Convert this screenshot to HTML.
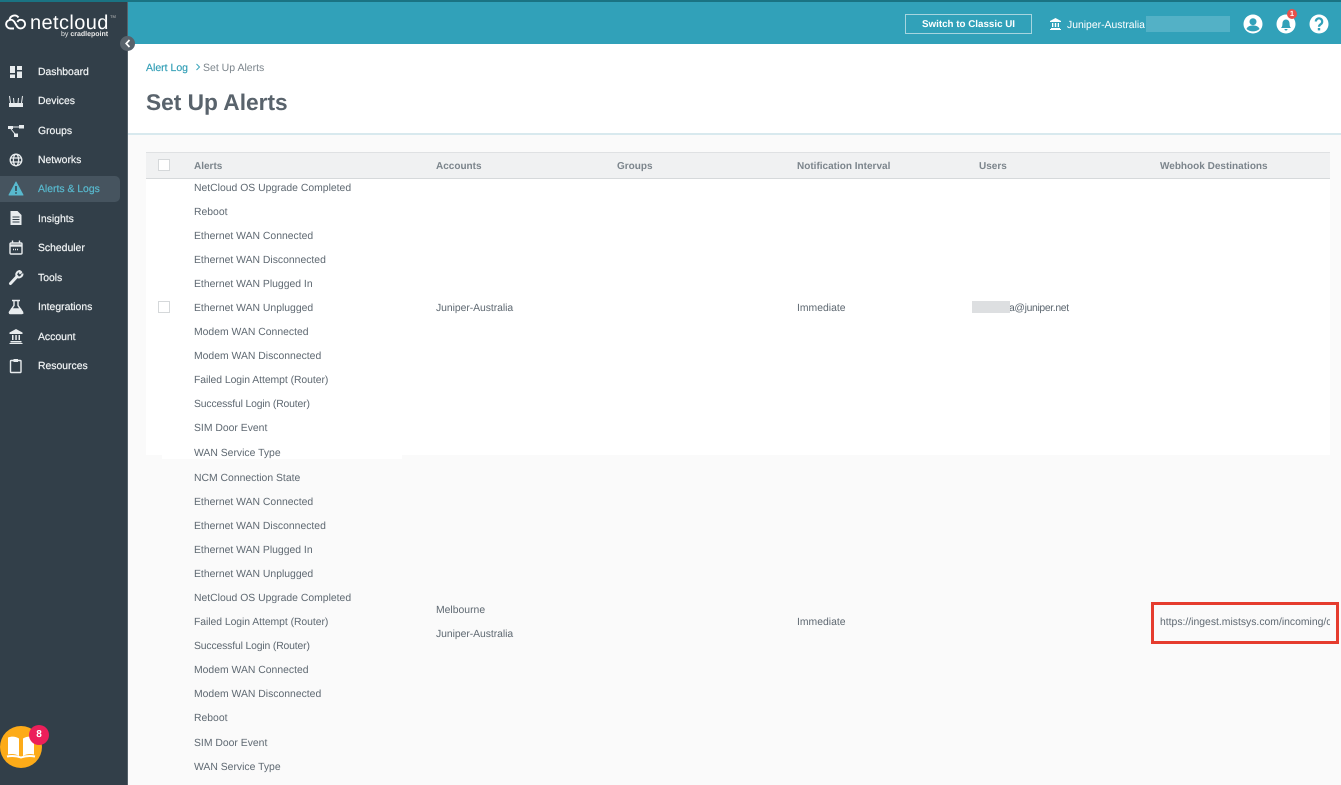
<!DOCTYPE html>
<html><head><meta charset="utf-8"><style>
*{box-sizing:border-box}
html,body{margin:0;padding:0;width:1341px;height:785px;overflow:hidden;background:#fafafa;font-family:"Liberation Sans",sans-serif;color:#5d6770;text-rendering:geometricPrecision}
.a{position:absolute;white-space:nowrap}
.n{position:absolute;left:38px;font-size:10.4px;color:#f0f3f4;line-height:14px;font-weight:400;-webkit-text-stroke:.2px #f0f3f4}
.i{position:absolute;left:7px;width:18px;height:18px}
.t{position:absolute;left:194px;font-size:10.4px;line-height:14px;white-space:nowrap;color:#5f6972}
.s{letter-spacing:-.15px}
.f{letter-spacing:-.05px}
.h{position:absolute;top:160px;font-size:10px;line-height:14px;font-weight:700;color:#7c858c;white-space:nowrap}
.cb{position:absolute;left:158px;width:12px;height:12px;background:#fff;border:1px solid #d5d8da}
</style></head><body>
<div class="a" style="left:0;top:0;width:128px;height:785px;background:#323f49"></div>
<div class="a" style="left:127px;top:0;width:1px;height:785px;background:#55616a"></div>
<div class="a" style="left:128px;top:1px;width:1213px;height:43px;background:#31a1b9"></div>
<div class="a" style="left:0;top:0;width:1341px;height:2px;background:#1a7383"></div>
<div class="a" style="left:128px;top:44px;width:1213px;height:90px;background:#fff"></div>
<div class="a" style="left:128px;top:133px;width:1213px;height:2px;background:#d8e9ee"></div>

<svg class="a" style="left:5px;top:12px" width="22" height="20" viewBox="0 0 22 20" fill="none" stroke="#fff" stroke-width="1.900"><path d="M9 16.500H5.500a4.300 4.300 0 0 1-1-8.500 5 5 0 0 1 9-2.500"/><path d="M4.500 8c2.500-1 4.500 1 5.500 3l1.500 2.500c1 2 2.500 3 4.300 2.900a4.300 4.300 0 0 0 0-8.600c-1.500 0-2.800 1-3.500 2.200"/></svg>
<div class="a" style="left:30px;top:11px;font-size:20px;line-height:24px;color:#fff;letter-spacing:.4px">netcloud</div>
<div class="a" style="left:110px;top:14px;font-size:4px;line-height:5px;color:#bbb">TM</div>
<div class="a" style="left:61px;top:30px;font-size:7px;line-height:9px;color:#e8e8e8">by <b>cradlepoint</b></div>
<div class="a" style="left:120px;top:36px;width:15px;height:15px;border-radius:50%;background:#58626b"></div>
<svg class="a" style="left:124px;top:39px" width="8" height="9" viewBox="0 0 8 9" fill="none" stroke="#fff" stroke-width="1.700"><path d="M5.500 1 2.200 4.500 5.500 8"/></svg>

<div class="a" style="left:0;top:176px;width:120px;height:26px;background:#46545f;border-radius:0 5px 5px 0"></div>

<svg class="i" style="top:63px" viewBox="0 0 18 18" fill="#e8ecee"><path d="M3 3h5v7H3zM10 3h5v4h-5zM3 11.500h5V15H3zM10 8.500h5V15h-5z"/></svg>
<div class="n" style="top:66px">Dashboard</div>
<svg class="i" style="top:92px" viewBox="0 0 18 18" fill="none" stroke="#e8ecee"><path d="M2.500 4l1 7M15.500 4l-1 7M6.500 6l.5 5M11.500 6l-.5 5"/><rect x="2" y="11" width="14" height="4" fill="#e8ecee" stroke="none"/></svg>
<div class="n" style="top:95px">Devices</div>
<svg class="i" style="top:122px" viewBox="0 0 18 18" fill="#e8ecee"><path d="M1 4h5v3H1zM12 3h5v3.500h-5zM7 11.500h4V15H7z"/><path d="M6 5h6M4 7l4 5" stroke="#e8ecee" fill="none"/></svg>
<div class="n" style="top:125px">Groups</div>
<svg class="i" style="top:151px" viewBox="0 0 18 18" fill="none" stroke="#e8ecee" stroke-width="1.300"><circle cx="9" cy="9" r="5.800"/><ellipse cx="9" cy="9" rx="2.600" ry="5.800"/><path d="M3.500 7h11M3.500 11h11"/></svg>
<div class="n" style="top:154px">Networks</div>
<svg class="i" style="top:180px" viewBox="0 0 18 18"><path d="M9 2 16 15H2z" fill="#58b9ce" stroke="#58b9ce" stroke-linejoin="round"/><path d="M9 6v5M9 12.200v1.500" stroke="#323f49" stroke-width="1.500"/></svg>
<div class="n" style="top:183px;color:#58b9ce;-webkit-text-stroke:.2px #58b9ce">Alerts &amp; Logs</div>
<svg class="i" style="top:209px" viewBox="0 0 18 18"><path d="M3.500 2h7l4 4v10h-11z" fill="#e8ecee"/><path d="M5.500 8h7M5.500 10.500h7M5.500 13h7" stroke="#323f49"/></svg>
<div class="n" style="top:213px">Insights</div>
<svg class="i" style="top:239px" viewBox="0 0 18 18" fill="none" stroke="#e8ecee" stroke-width="1.400"><rect x="3" y="4" width="12" height="11" rx="1"/><path d="M3 6.500h12" stroke-width="2.400"/><path d="M5.500 1.500v3M12.500 1.500v3"/><path d="M6 10.500h6" stroke-dasharray="1 1"/></svg>
<div class="n" style="top:242px">Scheduler</div>
<svg class="i" style="top:268px" viewBox="0 0 18 18" fill="none" stroke="#e8ecee"><path d="M3.500 15.500 10 8.500" stroke-width="3" stroke-linecap="round"/><path d="M14.800 3.500l-2.500 2.200M15.500 5.500a3.800 3.800 0 0 1-5.500 3.500M9.500 8a3.800 3.800 0 0 1 4-5" stroke-width="2"/></svg>
<div class="n" style="top:272px">Tools</div>
<svg class="i" style="top:298px" viewBox="0 0 18 18" fill="none" stroke="#e8ecee" stroke-width="1.400"><path d="M5 2.500h8M7 3v4.500L2.500 14a1 1 0 0 0 1 1.500h11a1 1 0 0 0 1-1.500L11 7.500V3"/><path d="M4.500 11h9l2 4H3z" fill="#e8ecee"/></svg>
<div class="n" style="top:301px">Integrations</div>
<svg class="i" style="top:327px" viewBox="0 0 18 18" fill="#e8ecee"><path d="M9 2l6.500 3.500v1.500h-13V5.500zM3.500 14h11v1.500h-11zM2.500 16h13v1h-13z"/><path d="M5 8h1.500v5H5zM8.300 8h1.500v5H8.300zM11.500 8H13v5h-1.500z"/></svg>
<div class="n" style="top:331px">Account</div>
<svg class="i" style="top:357px" viewBox="0 0 18 18" fill="none" stroke="#e8ecee" stroke-width="1.400"><rect x="3.500" y="3.500" width="10.500" height="12" rx=".7"/><path d="M6.500 3.500H11" stroke-width="3"/></svg>
<div class="n" style="top:360px">Resources</div>

<div class="a" style="left:0;top:726px;width:42px;height:42px;border-radius:50%;background:#fdab18"></div>
<svg class="a" style="left:6px;top:735px" width="30" height="25" viewBox="0 0 30 25"><path d="M2 2.500c4-1.500 8-1 11 1V21c-3-2-7-2.500-11-1.500z" fill="#fff"/><path d="M28 2.500c-4-1.500-8-1-11 1V21c3-2 7-2.500 11-1.500z" fill="#fff"/><path d="M1 21.500c5-1 10-.5 14 1 4-1.500 9-2 14-1" fill="none" stroke="#fff" stroke-width="2"/></svg>
<div class="a" style="left:29px;top:725px;width:20px;height:20px;border-radius:50%;background:#ec1f5a;color:#fff;font-size:10px;font-weight:700;line-height:20px;text-align:center">8</div>

<div class="a" style="left:905px;top:14px;width:127px;height:20px;border:1px solid #a6d5df;color:#fff;font-size:9.800px;font-weight:700;line-height:20px;text-align:center">Switch to Classic UI</div>
<svg class="a" style="left:1050px;top:18px" width="11" height="12" viewBox="0 0 11 12" fill="#fff"><path d="M5.500 0 11 3v1H0V3zM1 10h9v1H1zM0 11h11v1H0z"/><path d="M2 5h1.300v4H2zM4.800 5h1.400v4H4.800zM7.700 5H9v4H7.700z"/></svg>
<div class="a" style="left:1067px;top:19px;font-size:10.400px;line-height:14px;color:#fff">Juniper-Australia</div>
<div class="a" style="left:1146px;top:16px;width:84px;height:16px;background:#53b1c6"></div>
<svg class="a" style="left:1243px;top:14px" width="20" height="20" viewBox="0 0 20 20"><circle cx="10" cy="10" r="9.500" fill="#fff"/><circle cx="10" cy="7.700" r="3.500" fill="#31a1b9"/><path d="M3.500 15c1-3 4-3.500 6.500-3.500s5.500.5 6.500 3.500c-3 3.200-10 3.200-13 0z" fill="#31a1b9"/></svg>
<svg class="a" style="left:1276px;top:14px" width="20" height="20" viewBox="0 0 20 20"><circle cx="10" cy="10" r="9.500" fill="#fff"/><path d="M5 14c1.500-1.500 1.300-3 1.500-5 .2-2 1.500-3.500 3.500-3.500s3.300 1.500 3.500 3.500c.2 2 0 3.500 1.500 5z" fill="#31a1b9"/><path d="M8.500 15h3a1.500 1.500 0 0 1-3 0z" fill="#31a1b9"/></svg>
<div class="a" style="left:1287px;top:9px;width:10px;height:10px;border-radius:50%;background:#e8504a;color:#fff;font-size:7.500px;font-weight:700;line-height:10px;text-align:center">1</div>
<svg class="a" style="left:1309px;top:14px" width="20" height="20" viewBox="0 0 20 20"><circle cx="10" cy="10" r="9.500" fill="#fff"/><path d="M6.800 7.500a3.200 3.200 0 1 1 5 2.700c-1.200.8-1.800 1.300-1.800 2.600" fill="none" stroke="#31a1b9" stroke-width="2.200"/><rect x="8.800" y="14" width="2.400" height="2.400" fill="#31a1b9"/></svg>

<div class="a" style="left:146px;top:61px;font-size:10.500px;line-height:14px;color:#2f9db5;-webkit-text-stroke:.15px #2f9db5">Alert Log</div>
<svg class="a" style="left:194.500px;top:63px" width="6" height="8" viewBox="0 0 6 8" fill="none" stroke="#3ba5bb" stroke-width="1"><path d="M1.500 1 4.500 4 1.500 7"/></svg>
<div class="a" style="left:203px;top:61px;font-size:10.500px;line-height:14px;color:#7c858c">Set Up Alerts</div>
<div class="a" style="left:146px;top:88px;font-size:22.700px;line-height:29px;font-weight:700;color:#59636c">Set Up Alerts</div>

<div class="a" style="left:146px;top:152px;width:1184px;height:27px;background:#f0f1f2;border-top:1px solid #dfe1e3;border-bottom:1px solid #d6d9db"></div>
<div class="a" style="left:146px;top:179px;width:1184px;height:276px;background:#fff"></div>
<div class="a" style="left:162px;top:455px;width:240px;height:4px;background:#fff"></div>
<div class="cb" style="top:159px"></div>
<div class="cb" style="top:301px"></div>
<div class="h" style="left:194px">Alerts</div>
<div class="h" style="left:436px">Accounts</div>
<div class="h" style="left:617px">Groups</div>
<div class="h" style="left:797px">Notification Interval</div>
<div class="h" style="left:979px">Users</div>
<div class="h" style="left:1160px">Webhook Destinations</div>

<div class="t" style="top:182px">NetCloud OS Upgrade Completed</div>
<div class="t" style="top:206px">Reboot</div>
<div class="t" style="top:230px">Ethernet WAN Connected</div>
<div class="t" style="top:254px">Ethernet WAN Disconnected</div>
<div class="t" style="top:278px">Ethernet WAN Plugged In</div>
<div class="t" style="top:302px">Ethernet WAN Unplugged</div>
<div class="t" style="top:326px">Modem WAN Connected</div>
<div class="t" style="top:350px">Modem WAN Disconnected</div>
<div class="t f" style="top:374px">Failed Login Attempt (Router)</div>
<div class="t s" style="top:398px">Successful Login (Router)</div>
<div class="t" style="top:422px">SIM Door Event</div>
<div class="t" style="top:447px">WAN Service Type</div>
<div class="t f" style="left:436px;top:302px">Juniper-Australia</div>
<div class="t" style="left:797px;top:302px">Immediate</div>
<div class="t" style="left:1009px;top:302px;letter-spacing:-.35px">a@juniper.net</div>
<div class="a" style="left:972px;top:301px;width:38px;height:12px;background:#dddfe1"></div>

<div class="t" style="top:472px">NCM Connection State</div>
<div class="t" style="top:496px">Ethernet WAN Connected</div>
<div class="t" style="top:520px">Ethernet WAN Disconnected</div>
<div class="t" style="top:544px">Ethernet WAN Plugged In</div>
<div class="t" style="top:568px">Ethernet WAN Unplugged</div>
<div class="t" style="top:592px">NetCloud OS Upgrade Completed</div>
<div class="t f" style="top:616px">Failed Login Attempt (Router)</div>
<div class="t s" style="top:640px">Successful Login (Router)</div>
<div class="t" style="top:664px">Modem WAN Connected</div>
<div class="t" style="top:688px">Modem WAN Disconnected</div>
<div class="t" style="top:712px">Reboot</div>
<div class="t" style="top:737px">SIM Door Event</div>
<div class="t" style="top:761px">WAN Service Type</div>
<div class="t" style="left:436px;top:604px">Melbourne</div>
<div class="t f" style="left:436px;top:628px">Juniper-Australia</div>
<div class="t" style="left:797px;top:616px">Immediate</div>
<div class="t" style="left:1160px;top:616px;width:170px;overflow:hidden">https://ingest.mistsys.com/incoming/cradlepoint</div>
<div class="a" style="left:1151px;top:602px;width:188px;height:42px;border:3px solid #e53c2e"></div>
</body></html>
